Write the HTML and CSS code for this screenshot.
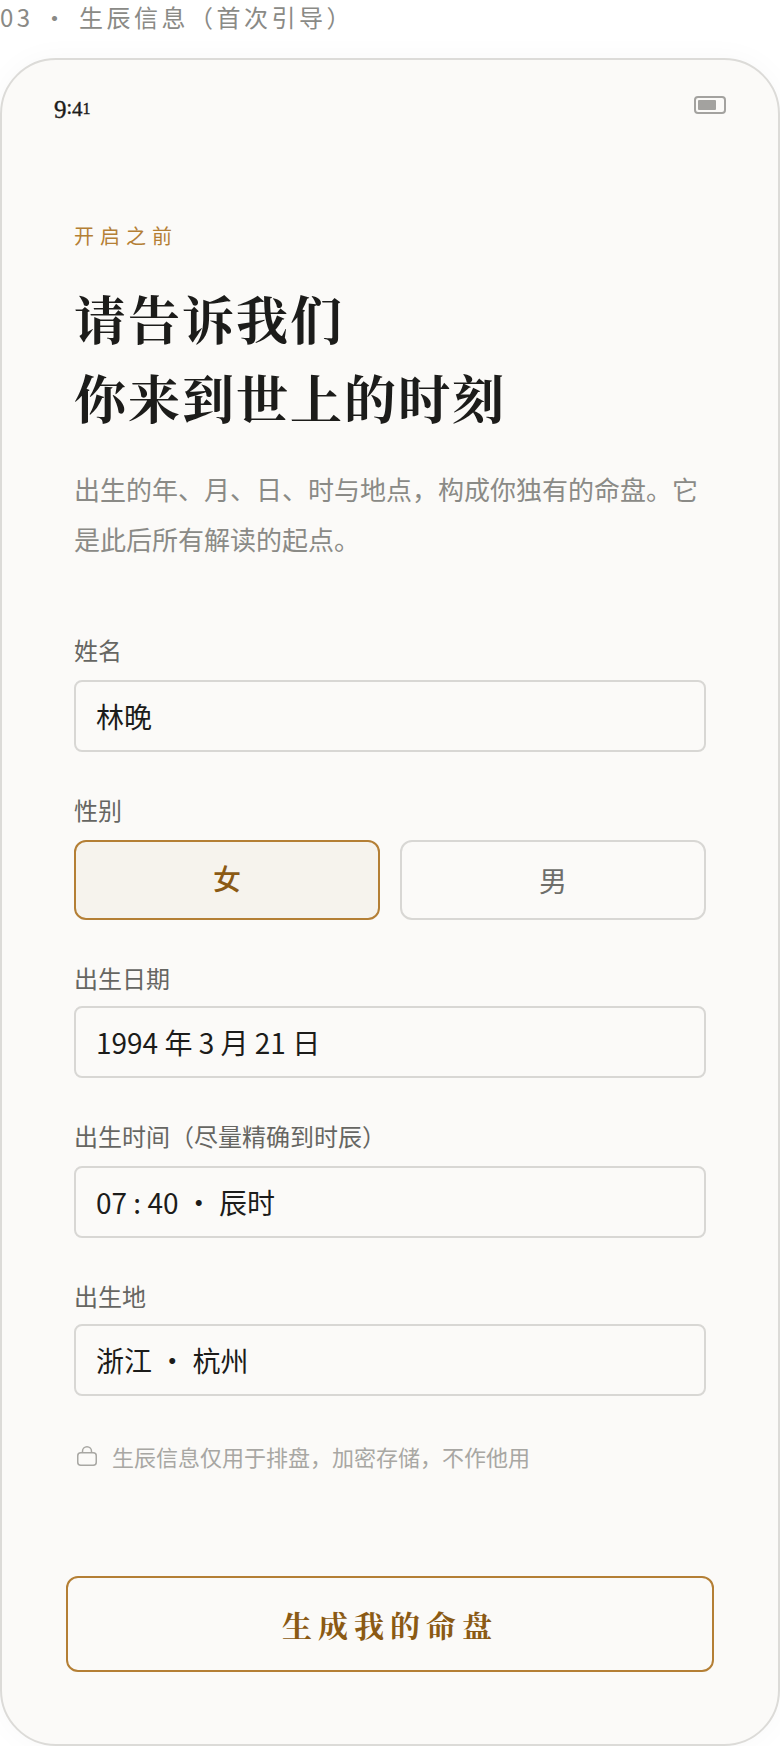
FILE: index.html
```html
<!DOCTYPE html>
<html lang="zh">
<head>
<meta charset="utf-8">
<title>生辰信息</title>
<link rel="stylesheet" href="styles.css">
</head>
<body>
<div class="caption">03 · 生辰信息（首次引导）</div>
<main class="phone">
  <div class="status">
    <span class="time"><span class="d9">9</span>:<span class="d4">4</span><span class="d1">1</span></span>
    <span class="battery"><span class="battery-fill"></span></span>
  </div>
  <div class="content">
    <div class="eyebrow">开启之前</div>
    <h1 class="title">请告诉我们<br>你来到世上的时刻</h1>
    <p class="intro">出生的年、月、日、时与地点，构成你独有的命盘。它是此后所有解读的起点。</p>
    <div class="field">
      <div class="label">姓名</div>
      <div class="input">林晚</div>
    </div>
    <div class="field">
      <div class="label">性别</div>
      <div class="toggle">
        <div class="option selected">女</div>
        <div class="option">男</div>
      </div>
    </div>
    <div class="field tight">
      <div class="label">出生日期</div>
      <div class="input">1994 年 3 月 21 日</div>
    </div>
    <div class="field">
      <div class="label">出生时间（尽量精确到时辰）</div>
      <div class="input">07 : 40 · 辰时</div>
    </div>
    <div class="field tight">
      <div class="label">出生地</div>
      <div class="input">浙江 · 杭州</div>
    </div>
    <div class="note">
      <svg class="lock" viewBox="0 0 20 20" width="20" height="20" fill="none" stroke="currentColor" stroke-width="1.5"><rect x="0.75" y="6.75" width="18.5" height="12.5" rx="3"/><path d="M5.5 6.75V5.25a4.5 4.5 0 0 1 9 0v1.5"/></svg>
      <span>生辰信息仅用于排盘，加密存储，不作他用</span>
    </div>
  </div>
  <div class="action"><div class="cta">生成我的命盘</div></div>
</main>
</body>
</html>
```
FILE: styles.css
```css
* { box-sizing: border-box; }
html, body { margin: 0; padding: 0; }
body {
  width: 780px;
  height: 1746px;
  overflow: hidden;
  background: #fff;
  font-family: "Noto Sans CJK SC", "Noto Sans", sans-serif;
}
.caption {
  height: 58px;
  font-size: 24px;
  line-height: 34px;
  letter-spacing: 3.5px;
  color: #8a8a86;
}
.phone {
  height: 1688px;
  background: #fbfaf8;
  border: 2px solid #dcdbd8;
  border-radius: 56px;
  box-shadow: 0 0 30px rgba(0, 0, 0, 0.03);
  display: flex;
  flex-direction: column;
  overflow: hidden;
}
.status {
  display: flex;
  justify-content: space-between;
  align-items: center;
  height: 40px;
  margin-top: 28px;
  padding: 0 52px;
}
.time {
  font-family: "Liberation Serif", serif;
  font-size: 20px;
  line-height: 24px;
  -webkit-text-stroke: 0.4px #1c1c1a;
  color: #1c1c1a;
}
.d9 {
  font-size: 25px;
  vertical-align: -4px;
}
.d4 {
  font-size: 21px;
  vertical-align: -2px;
}
.d1 { font-size: 16px; }
.battery {
  width: 32px;
  height: 18px;
  margin-bottom: 6px;
  border: 2px solid #a3a29f;
  border-radius: 4px;
  padding: 2px;
  display: flex;
}
.battery-fill {
  width: 18px;
  background: #a3a29f;
  border-radius: 1px;
}
.content {
  flex: 1;
  padding: 95px 72px 0;
}
.eyebrow {
  font-size: 20px;
  line-height: 26px;
  letter-spacing: 6px;
  color: #b47f35;
}
.title {
  margin: 29px 0 0;
  font-family: "Noto Serif CJK SC", "Liberation Serif", serif;
  font-size: 52px;
  line-height: 79px;
  font-weight: 700;
  letter-spacing: 2px;
  color: #1c1c1a;
}
.intro {
  margin: 28px 0 0;
  font-size: 26px;
  line-height: 50px;
  color: #8a8a86;
}
.field { margin-top: 40px; }
.intro + .field { margin-top: 68px; }
.label {
  font-size: 24px;
  line-height: 36px;
  color: #666662;
  margin-bottom: 12px;
}
.tight .label { margin-bottom: 10px; }
.input {
  height: 72px;
  padding: 0 20px;
  display: flex;
  align-items: center;
  border: 2px solid #d8d7d4;
  border-radius: 8px;
  font-size: 28px;
  color: #1c1c1a;
}
.toggle {
  display: flex;
  gap: 20px;
}
.option {
  flex: 1;
  height: 80px;
  display: flex;
  align-items: center;
  justify-content: center;
  border: 2px solid #d8d7d4;
  border-radius: 12px;
  font-size: 28px;
  color: #6e6e6a;
}
.option.selected {
  padding-bottom: 4px;
  background: #f6f3ed;
  border-color: #b47f35;
  color: #8b5a14;
  font-weight: 500;
}
.note {
  display: flex;
  align-items: center;
  gap: 15px;
  margin-top: 44px;
  padding-left: 3px;
  font-size: 22px;
  line-height: 32px;
  color: #a8a7a3;
}
.lock { flex: none; }
.action { padding: 0 64px 72px; }
.cta {
  height: 96px;
  display: flex;
  align-items: center;
  justify-content: center;
  border: 2px solid #b47f35;
  border-radius: 12px;
  font-family: "Noto Serif CJK SC", "Liberation Serif", serif;
  font-size: 30px;
  font-weight: 700;
  letter-spacing: 6px;
  color: #8b5a14;
}
```
